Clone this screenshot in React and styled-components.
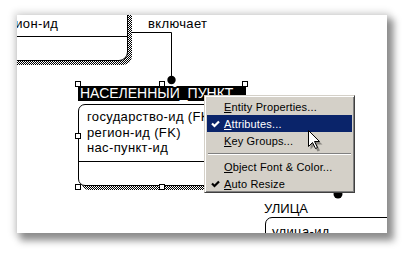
import styled, { createGlobalStyle } from 'styled-components';

const GlobalStyle = createGlobalStyle`
  html, body {
    margin: 0;
    background: #fff;
  }
  body {
    font-family: "Liberation Sans", Arial, sans-serif;
  }
`;

const dither = `repeating-conic-gradient(#000 0 25%, #fff 0 50%) 0 0 / 2px 2px`;

const Page = styled.div`
  width: 412px;
  height: 258px;
  box-sizing: border-box;
  padding: 15px 0 0 17px;
  overflow: hidden;
`;

const Paper = styled.div`
  position: relative;
  width: 370px;
  height: 218px;
  background: #fff;
  overflow: hidden;
  box-shadow: 0 0 7px 3px rgba(0, 0, 0, 0.14), 5px 6px 7px 2px rgba(0, 0, 0, 0.38);
`;

const Wires = styled.svg`
  position: absolute;
  left: 0;
  top: 0;
  width: 370px;
  height: 218px;
  pointer-events: none;
`;

const Label = styled.div`
  position: absolute;
  left: ${p => p.$x}px;
  top: ${p => p.$y}px;
  font-size: 13px;
  line-height: 15px;
  letter-spacing: 0.35px;
  color: #000;
  white-space: nowrap;
`;

/* entity box with ERwin's dithered drop shadow */
const Box = styled.div`
  position: relative;
  box-sizing: border-box;
  border: 1px solid #000;
  background: #fff;
  border-radius: ${p => p.$radius};

  &::before {
    content: '';
    position: absolute;
    left: 3px;
    top: 3px;
    right: -5px;
    bottom: -5px;
    border-radius: inherit;
    background: ${p => (p.$shadow ? dither : 'transparent')};
    z-index: -1;
  }
`;

const Node = styled.div`
  position: absolute;
  left: ${p => p.$x}px;
  top: ${p => p.$y}px;
  width: ${p => p.$w}px;
  z-index: 0;
  isolation: isolate;
`;

const KeyArea = styled.div`
  box-sizing: border-box;
  height: ${p => p.$h}px;
  border-bottom: 1px solid #000;
  padding: ${p => p.$pad};
  display: flex;
  flex-direction: column;
  justify-content: ${p => (p.$bottom ? 'flex-end' : 'flex-start')};
`;

const Attr = styled.div`
  font-size: 13px;
  line-height: 15.5px;
  letter-spacing: 0.35px;
  white-space: nowrap;
  color: #000;
`;

const TitleBar = styled.div`
  height: 15px;
  margin-top: 2px;
  background: #000;
  color: #fff;
  font-size: 14px;
  line-height: 15px;
  padding-left: 2px;
  white-space: nowrap;
`;

const Selection = styled.div`
  position: absolute;
  left: 61px;
  top: 69px;
  width: 167px;
  height: 103px;
`;

const Handle = styled.span`
  position: absolute;
  left: calc(${p => p.$x}% - 3px);
  top: calc(${p => p.$y}% - 3px);
  width: 6px;
  height: 6px;
  box-sizing: border-box;
  border: 1px solid #000;
  background: #fff;
  z-index: 2;
`;

const StreetTitle = styled.div`
  font-size: 13px;
  line-height: 15px;
  white-space: nowrap;
`;

const Menu = styled.div`
  position: absolute;
  left: 187px;
  top: 80px;
  width: 151px;
  height: 98px;
  box-sizing: border-box;
  background: #d4d0c8;
  border: 1px solid;
  border-color: #d4d0c8 #404040 #404040 #d4d0c8;
  box-shadow: inset 1px 1px 0 #fff, inset -1px -1px 0 #808080;
  padding: 2px 2px;
  font-size: 11px;
  z-index: 5;
`;

const MenuItem = styled.div`
  display: flex;
  align-items: center;
  height: 17px;
  background: ${p => (p.$active ? '#0a246a' : 'transparent')};
  color: ${p => (p.$active ? '#fff' : '#000')};
  white-space: nowrap;
  letter-spacing: 0.15px;
`;

const CheckSlot = styled.span`
  display: flex;
  align-items: center;
  justify-content: center;
  width: 17px;
  height: 17px;
  flex: none;
`;

const Key = styled.span`
  text-decoration: underline;
  text-underline-offset: 1px;
`;

const Separator = styled.div`
  height: 9px;
  display: flex;
  flex-direction: column;
  justify-content: center;
  padding: 0 1px;

  &::before {
    content: '';
    height: 1px;
    background: #808080;
    border-bottom: 1px solid #fff;
  }
`;

const Cursor = styled.svg`
  position: absolute;
  left: 291px;
  top: 115px;
  z-index: 6;
  overflow: visible;
`;

const Check = ({ color }) => (
  <svg width="9" height="8" viewBox="0 0 9 8">
    <path d="M1 3.5 L3.5 6 L8 1.5" fill="none" stroke={color} strokeWidth="2.2" />
  </svg>
);

const items = [
  { key: 'E', rest: 'ntity Properties...' },
  { key: 'A', rest: 'ttributes...', active: true, checked: true },
  { key: 'K', rest: 'ey Groups...' },
  { sep: true },
  { key: 'O', rest: 'bject Font & Color...' },
  { key: 'A', rest: 'uto Resize', checked: true }
];

const App = () => (
  <>
    <GlobalStyle />
    <Page>
      <Paper>
        <Node $x={-60} $y={-20} $w={171}>
          <Box $radius="0 0 9px 0" $shadow style={{ height: 66 }}>
            <KeyArea $h={41} $pad="0 0 5px 37px" $bottom>
              <Attr>регион-ид</Attr>
            </KeyArea>
          </Box>
        </Node>

        <Label $x={131} $y={1}>включает</Label>

        <Wires viewBox="0 0 370 218">
          <path d="M115 17.5 H154.5 V64" fill="none" stroke="#000" strokeWidth="1" />
          <circle cx="154.5" cy="65" r="4.2" fill="#000" />
          <circle cx="321" cy="179" r="4.5" fill="#000" />
        </Wires>

        <Selection>
          <Node $x={0} $y={0} $w={168}>
            <TitleBar>НАСЕЛЕННЫЙ_ПУНКТ</TitleBar>
            <Box $radius="7px" $shadow style={{ marginTop: 3, height: 82 }}>
              <KeyArea $h={57} $pad="4px 0 0 8px">
                <Attr>государство-ид (FK)</Attr>
                <Attr>регион-ид (FK)</Attr>
                <Attr>нас-пункт-ид</Attr>
              </KeyArea>
            </Box>
          </Node>
          <Handle $x={0} $y={0} />
          <Handle $x={50} $y={0} />
          <Handle $x={100} $y={0} />
          <Handle $x={0} $y={50} />
          <Handle $x={100} $y={50} />
          <Handle $x={0} $y={100} />
          <Handle $x={50} $y={100} />
          <Handle $x={100} $y={100} />
        </Selection>

        <Node $x={247} $y={186} $w={160}>
          <StreetTitle>УЛИЦА</StreetTitle>
          <Box $radius="7px 0 0 0" style={{ marginLeft: 1, marginTop: 1, height: 40 }}>
            <KeyArea $h={30} $pad="6px 0 0 6px">
              <Attr>улица-ид</Attr>
            </KeyArea>
          </Box>
        </Node>

        <Menu>
          {items.map((it, i) =>
            it.sep ? (
              <Separator key={i} />
            ) : (
              <MenuItem key={i} $active={it.active}>
                <CheckSlot>{it.checked && <Check color={it.active ? '#fff' : '#000'} />}</CheckSlot>
                <span>
                  <Key>{it.key}</Key>
                  {it.rest}
                </span>
              </MenuItem>
            )
          )}
        </Menu>

        <Cursor width="14" height="22" viewBox="0 0 14 22">
          <path d="M2.5 3.5 V19.5 L6.5 15.5 L9.5 21.5 L12 20.5 L9 14.5 H14.5 Z" fill="#000" opacity="0.35" />
          <path d="M0.5 0.5 V16.5 L4.5 12.5 L7.5 18.5 L9.5 17.5 L6.5 11.5 H11.5 Z" fill="#fff" stroke="#000" strokeWidth="1" />
        </Cursor>
      </Paper>
    </Page>
  </>
);

export default App;
